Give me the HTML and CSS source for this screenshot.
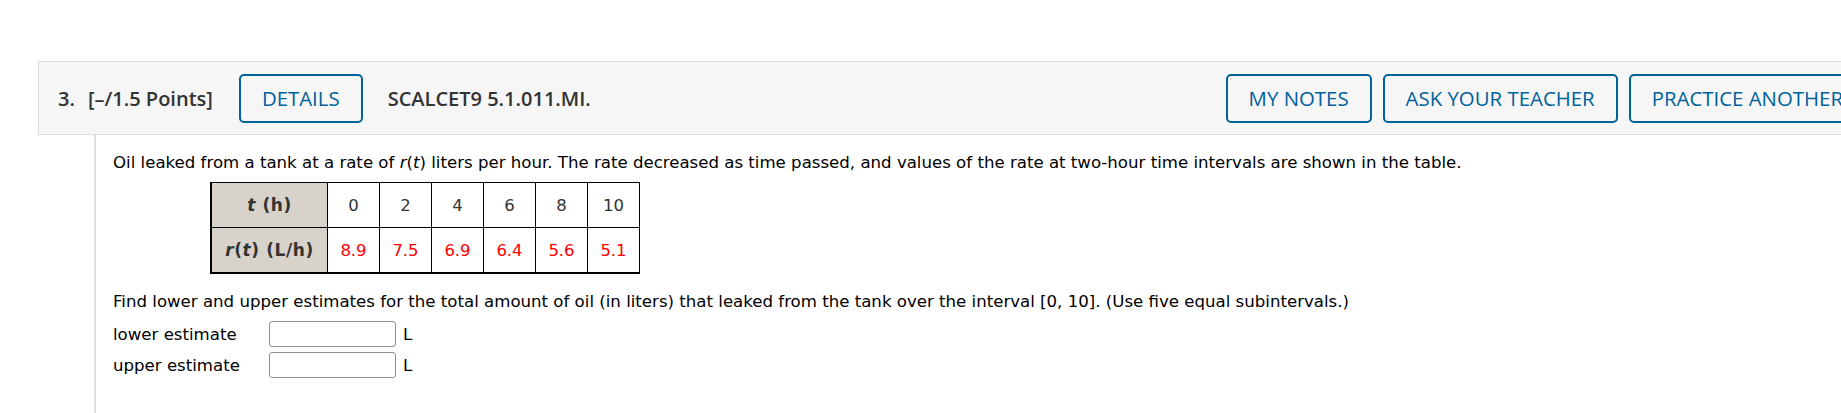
FILE: index.html
```html
<!DOCTYPE html>
<html lang="en">
<head>
<meta charset="utf-8">
<title>Question 3</title>
<link rel="stylesheet" href="styles.css">
</head>
<body>
<div class="question">
  <div class="q-header">
    <span class="q-num">3.</span>
    <span class="q-points">[–/1.5 Points]</span>
    <button class="btn btn-details">DETAILS</button>
    <span class="q-code">SCALCET9 5.1.011.MI.</span>
    <div class="q-actions">
      <button class="btn">MY NOTES</button>
      <button class="btn">ASK YOUR TEACHER</button>
      <button class="btn">PRACTICE ANOTHER</button>
    </div>
  </div>
  <div class="q-body">
    <p class="q-text">Oil leaked from a tank at a rate of <i>r</i>(<i>t</i>) liters per hour. The rate decreased as time passed, and values of the rate at two-hour time intervals are shown in the table.</p>
    <table class="data">
      <tr>
        <th><i>t</i> (h)</th>
        <td>0</td><td>2</td><td>4</td><td>6</td><td>8</td><td>10</td>
      </tr>
      <tr class="vals">
        <th><i>r</i>(<i>t</i>) (L/h)</th>
        <td>8.9</td><td>7.5</td><td>6.9</td><td>6.4</td><td>5.6</td><td>5.1</td>
      </tr>
    </table>
    <p class="q-text q-find">Find lower and upper estimates for the total amount of oil (in liters) that leaked from the tank over the interval [0, 10]. (Use five equal subintervals.)</p>
    <div class="answers">
      <label class="ans-label">lower estimate</label>
      <input class="ans-input" type="text">
      <span class="ans-unit">L</span>
      <label class="ans-label">upper estimate</label>
      <input class="ans-input" type="text">
      <span class="ans-unit">L</span>
    </div>
  </div>
</div>
</body>
</html>
```

FILE: styles.css
```css
html, body {
  margin: 0;
  padding: 0;
  background: #ffffff;
  overflow: hidden;
}

.question {
  padding-top: 61px;
  padding-left: 38px;
  width: 1900px;
  height: 352px;
  display: flex;
  flex-direction: column;
}

.q-header {
  display: flex;
  align-items: center;
  height: 74px;
  box-sizing: border-box;
  background: #f6f6f6;
  border: 1px solid #dcdcdc;
  border-right: none;
  padding-left: 19px;
  font-family: "Open Sans", sans-serif;
  color: #333333;
}

.q-num {
  font-size: 20px;
  font-weight: 600;
  margin-right: 13px;
}

.q-points {
  font-size: 20px;
  font-weight: 600;
  margin-right: 26px;
}

.q-code {
  font-size: 20px;
  font-weight: 600;
  margin-left: 25px;
}

.btn {
  font-family: "Open Sans", sans-serif;
  font-size: 20.4px;
  font-weight: 400;
  color: #00629b;
  background: transparent;
  border: 2px solid #00629b;
  border-radius: 5px;
  height: 49px;
  padding: 0 21px;
  box-sizing: border-box;
  white-space: nowrap;
  line-height: 1;
}

.q-actions {
  margin-left: auto;
  display: flex;
  gap: 11px;
  padding-right: 72px;
}

.q-body {
  flex: 1;
  margin-left: 56px;
  border-left: 2px solid #dddddd;
  padding-left: 17px;
  padding-top: 17px;
  font-family: "DejaVu Sans", Verdana, sans-serif;
  font-size: 16.6px;
  color: #000000;
}

.q-text {
  margin: 0;
  line-height: 21px;
}

.data {
  border-collapse: collapse;
  margin: 9px 0 0 97px;
  border-left: 2px solid #000;
  border-bottom: 2px solid #000;
}

.data th,
.data td {
  border: 1px solid #000;
  height: 44px;
  padding: 0;
  text-align: center;
  font-size: 16.5px;
}

.data th {
  width: 115px;
  background: #d7d3ca;
  color: #333333;
  font-weight: bold;
  font-size: 17px;
  letter-spacing: 0.6px;
}

.data td {
  width: 51px;
  color: #333333;
}

.data .vals td {
  color: #ff0000;
}

.q-find {
  margin-top: 17px;
}

.answers {
  display: grid;
  grid-template-columns: 149px 127px auto;
  column-gap: 7px;
  row-gap: 5px;
  align-items: center;
  margin-top: 9px;
  justify-content: start;
}

.ans-label {
  line-height: 21px;
}

.ans-input {
  width: 127px;
  height: 26px;
  box-sizing: border-box;
  border: 1px solid #8f8f8f;
  border-radius: 3px;
  margin: 0;
  padding: 0 4px;
  background: #ffffff;
}

.ans-unit {
  line-height: 21px;
}
```
